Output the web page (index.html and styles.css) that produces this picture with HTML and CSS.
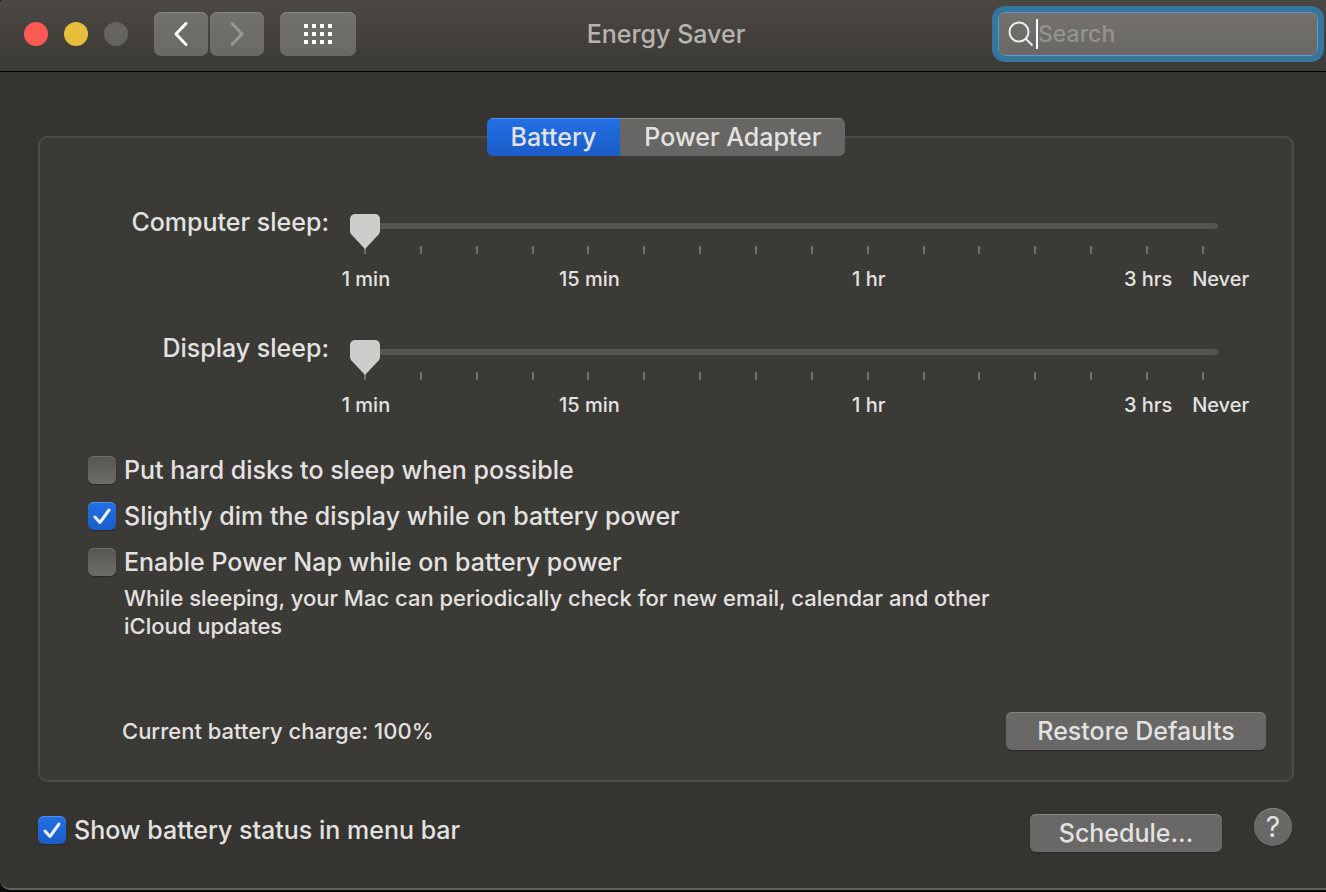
FILE: index.html
```
<!DOCTYPE html>
<html lang="en">
<head>
    <meta charset="UTF-8">
    <meta name="viewport" content="width=device-width, initial-scale=1.0">
    <title>Energy Saver</title>
    <link rel="stylesheet" href="styles.css">
</head>
<body>

    <div class="window">
        <header class="titlebar">
            <div class="controls">
                <div class="lights">
                    <button class="light close" aria-label="Close"></button>
                    <button class="light minimize" aria-label="Minimize"></button>
                    <button class="light zoom" aria-label="Zoom" disabled></button>
                </div>
                <div class="nav">
                    <button class="tool-btn" aria-label="Back">
                        <svg width="16" height="26" viewBox="0 0 16 26"><path d="M13 2.500 3 13l10 10.500"/></svg>
                    </button>
                    <button class="tool-btn forward" aria-label="Forward" disabled>
                        <svg width="16" height="26" viewBox="0 0 16 26"><path d="M3 2.500 13 13 3 23.500"/></svg>
                    </button>
                </div>
                <button class="tool-btn show-all" aria-label="Show All">
                    <svg width="28" height="20" viewBox="0 0 28 20">
                        <path d="M0 0h4v4H0zM8 0h4v4H8zM16 0h4v4h-4zM24 0h4v4h-4zM0 8h4v4H0zM8 8h4v4H8zM16 8h4v4h-4zM24 8h4v4h-4zM0 16h4v4H0zM8 16h4v4H8zM16 16h4v4h-4zM24 16h4v4h-4z"/>
                    </svg>
                </button>
            </div>
            <h1>Energy Saver</h1>
            <label class="search">
                <svg width="26" height="26" viewBox="0 0 26 26"><circle cx="11" cy="11" r="9.500"/><path d="M18 18l6.500 6.500"/></svg>
                <span class="caret"></span>
                <input type="text" placeholder="Search" aria-label="Search">
            </label>
        </header>

        <main>
            <div class="tabs" role="tablist">
                <button class="tab active" role="tab" aria-selected="true">Battery</button>
                <button class="tab" role="tab" aria-selected="false">Power Adapter</button>
            </div>

            <section class="panel">
                <div class="sliders">
                    <div class="slider-row">
                        <label for="computerSleep">Computer sleep:</label>
                        <div class="slider">
                            <input type="range" id="computerSleep" min="0" max="15" value="0">
                            <div class="ticks">
                                <i></i><i></i><i></i><i></i><i></i><i></i><i></i><i></i>
                                <i></i><i></i><i></i><i></i><i></i><i></i><i></i><i></i>
                            </div>
                            <div class="scale">
                                <span class="at-1">1 min</span>
                                <span class="at-5">15 min</span>
                                <span class="at-10">1 hr</span>
                                <span class="at-15">3 hrs</span>
                                <span class="never">Never</span>
                            </div>
                        </div>
                    </div>
                    <div class="slider-row">
                        <label for="displaySleep">Display sleep:</label>
                        <div class="slider">
                            <input type="range" id="displaySleep" min="0" max="15" value="0">
                            <div class="ticks">
                                <i></i><i></i><i></i><i></i><i></i><i></i><i></i><i></i>
                                <i></i><i></i><i></i><i></i><i></i><i></i><i></i><i></i>
                            </div>
                            <div class="scale">
                                <span class="at-1">1 min</span>
                                <span class="at-5">15 min</span>
                                <span class="at-10">1 hr</span>
                                <span class="at-15">3 hrs</span>
                                <span class="never">Never</span>
                            </div>
                        </div>
                    </div>
                </div>

                <div class="options">
                    <div class="check">
                        <input type="checkbox" id="hardDisks">
                        <label for="hardDisks">Put hard disks to sleep when possible</label>
                    </div>
                    <div class="check">
                        <span class="box">
                            <input type="checkbox" id="dimDisplay" checked>
                            <svg width="28" height="28" viewBox="0 0 28 28"><path d="M7 15l5 5.500L21 8"/></svg>
                        </span>
                        <label for="dimDisplay">Slightly dim the display while on battery power</label>
                    </div>
                    <div class="check">
                        <input type="checkbox" id="powerNap">
                        <label for="powerNap">Enable Power Nap while on battery power</label>
                    </div>
                </div>
                <p class="note">While sleeping, your Mac can periodically check for new email, calendar and other iCloud updates</p>

                <div class="panel-footer">
                    <p class="charge">Current battery charge: 100%</p>
                    <button class="btn restore">Restore Defaults</button>
                </div>
            </section>
        </main>

        <footer>
            <div class="check">
                <span class="box">
                    <input type="checkbox" id="menuBar" checked>
                    <svg width="28" height="28" viewBox="0 0 28 28"><path d="M7 15l5 5.500L21 8"/></svg>
                </span>
                <label for="menuBar">Show battery status in menu bar</label>
            </div>
            <button class="btn schedule">Schedule...</button>
            <button class="help" aria-label="Help">?</button>
        </footer>
    </div>

</body>
</html>
```
FILE: styles.css
```
* {
    box-sizing: border-box;
}

body {
    margin: 0;
    min-height: 100vh;
    padding-bottom: 2px;
    display: flex;
    flex-direction: column;
    background: #0c0a0a;
    color: #e3e2e1;
    font-family: Inter, "Liberation Sans", sans-serif;
    font-size: 25px;
    font-weight: 500;
    line-height: 28px;
}

button,
input {
    font: inherit;
    color: inherit;
    margin: 0;
    padding: 0;
    border: none;
}

svg {
    display: block;
    fill: none;
    flex: none;
}

.window {
    flex: 1;
    display: flex;
    flex-direction: column;
    background: #353430;
    border-bottom: 2px solid #62615d;
    border-radius: 3px 0 0 10px;
    overflow: hidden;
}

/* Title bar */
.titlebar {
    display: grid;
    grid-template-columns: 1fr auto 1fr;
    align-items: center;
    padding: 12px 8px 15px 14px;
    background: linear-gradient(#4b4743, #3c3a36);
    border-bottom: 1px solid #000;
}

.controls {
    display: flex;
    align-items: center;
    padding-left: 10px;
}

.lights {
    display: flex;
    gap: 16px;
    margin-right: 26px;
}

.light {
    width: 24px;
    height: 24px;
    border-radius: 50%;
}

.close {
    background: #fe5b57;
}

.minimize {
    background: #e5bf3c;
}

.zoom {
    background: #656461;
}

.nav {
    display: flex;
    gap: 2px;
    margin-right: 16px;
}

.tool-btn {
    width: 54px;
    height: 44px;
    display: flex;
    align-items: center;
    justify-content: center;
    border-radius: 7px;
    background: linear-gradient(#73716d, #6a6965);
    box-shadow: inset 0 1px #878581;
}

.tool-btn path {
    stroke: #fff;
    stroke-width: 3;
    stroke-linecap: round;
    stroke-linejoin: round;
}

.forward path {
    stroke: #989794;
}

.show-all {
    width: 76px;
}

.show-all path {
    fill: #fff;
    stroke: none;
}

h1 {
    margin: 0;
    font-size: 25px;
    font-weight: 500;
    color: #b6b4b2;
}

.search {
    justify-self: end;
    width: 320px;
    height: 44px;
    display: flex;
    align-items: center;
    padding-left: 9px;
    border: 1px solid #5a9cc8;
    border-radius: 7px;
    background: linear-gradient(#74716d, #696865);
    box-shadow: 0 0 0 6px #35759e;
}

.search svg {
    stroke: #f0efef;
    stroke-width: 2;
}

.caret {
    width: 2px;
    height: 30px;
    margin-left: 2px;
    background: #fff;
}

.search input {
    flex: 1;
    min-width: 0;
    height: 30px;
    font-size: 23px;
    background: none;
    outline: none;
}

.search input::placeholder {
    color: #949390;
    opacity: 1;
}

/* Tabs sit over the top edge of the panel */
main {
    display: flex;
    flex-direction: column;
    padding: 46px 32px 0 38px;
}

.tabs {
    position: relative;
    z-index: 1;
    align-self: center;
    display: flex;
    margin-bottom: -20px;
    border-radius: 6px;
    overflow: hidden;
}

.tab {
    height: 38px;
    padding: 0 24px;
    background: #676664;
    box-shadow: inset 0 1px #848381;
}

.tab.active {
    background: linear-gradient(#2270e4, #1b5dc9);
    box-shadow: inset 0 1px #4f8ded;
}

.panel {
    padding: 70px 26px 30px 48px;
    background: #3c3a36;
    border: 2px solid #4b4a46;
    border-radius: 9px;
}

/* Sliders */
.sliders {
    display: flex;
    flex-direction: column;
    gap: 41px;
    padding-right: 48px;
}

.slider-row {
    display: grid;
    grid-template-columns: 241px 1fr;
    column-gap: 21px;
}

.slider-row label {
    text-align: right;
}

.slider {
    padding-top: 6px;
}

.slider input {
    -webkit-appearance: none;
    appearance: none;
    position: relative;
    z-index: 1;
    display: block;
    width: 100%;
    height: 24px;
    background: none;
}

.slider input::-webkit-slider-runnable-track {
    height: 6px;
    border-radius: 3px;
    background: #565550;
}

.slider input::-webkit-slider-thumb {
    -webkit-appearance: none;
    width: 30px;
    height: 35px;
    margin-top: -9px;
    border-radius: 5px 5px 0 0;
    background: #cdcdcb;
    clip-path: polygon(0 0, 100% 0, 100% 50%, 97% 57%, 50% 100%, 3% 57%, 0 50%);
}

.ticks {
    display: flex;
    justify-content: space-between;
    padding: 0 14px;
    margin-top: 8px;
}

.ticks i {
    width: 2px;
    height: 8px;
    background: #706f6c;
}

/* One column per tick, with the text centred under it */
.scale {
    display: grid;
    grid-template-columns: repeat(16, minmax(0, 1fr));
    margin: 11px -14px 0 -12px;
    font-size: 20px;
}

.scale span {
    display: flex;
    justify-content: center;
    white-space: nowrap;
    grid-row: 1;
}

.scale .at-1 {
    grid-column: 1;
}

.scale .at-5 {
    grid-column: 5;
}

.scale .at-10 {
    grid-column: 10;
}

.scale .at-15 {
    grid-column: 15;
}

.scale .never {
    grid-column: 16;
    justify-content: flex-start;
    padding-left: 16px;
}

/* Check boxes */
.options {
    display: flex;
    flex-direction: column;
    gap: 18px;
    margin-top: 37px;
}

.check {
    display: flex;
    align-items: center;
    gap: 8px;
}

.box {
    position: relative;
}

.box svg {
    position: absolute;
    top: 0;
    left: 0;
    stroke: #eaf1fc;
    stroke-width: 3;
    stroke-linecap: round;
    stroke-linejoin: round;
    pointer-events: none;
}

.check input {
    -webkit-appearance: none;
    appearance: none;
    display: block;
    width: 28px;
    height: 28px;
    border-radius: 6px;
    background: linear-gradient(#575653, #6d6c69);
    box-shadow: inset 0 1px #706f6d, 0 1px 1px #2b2a27;
}

.check input:checked {
    background: linear-gradient(#2270e4, #1b5dc9);
    box-shadow: inset 0 1px #4f8ded, 0 1px 1px #2b2a27;
}

/* the tick only shows while the box is checked */
.check input:not(:checked) + svg {
    display: none;
}

.note {
    margin: 8px 0 0 36px;
    max-width: 890px;
    font-size: 22px;
    font-weight: 450;
}

.panel-footer {
    display: flex;
    align-items: center;
    justify-content: space-between;
    margin-top: 72px;
    padding-left: 34px;
}

.charge {
    margin: 0;
    font-size: 22px;
    font-weight: 450;
}

/* Buttons */
.btn {
    height: 38px;
    border-radius: 6px;
    background: #696866;
    box-shadow: inset 0 1px #848381, 0 1px 1px #2b2a27;
}

.restore {
    width: 260px;
}

.schedule {
    width: 192px;
    align-self: flex-end;
    margin-left: auto;
}

footer {
    display: flex;
    align-items: center;
    height: 44px;
    margin: 26px 34px 36px 38px;
}

.help {
    width: 38px;
    height: 38px;
    align-self: flex-start;
    margin-left: 32px;
    border-radius: 50%;
    background: #696866;
    box-shadow: inset 0 1px #848381, 0 1px 1px #2b2a27;
    font-size: 28px;
    font-weight: 400;
}
```
